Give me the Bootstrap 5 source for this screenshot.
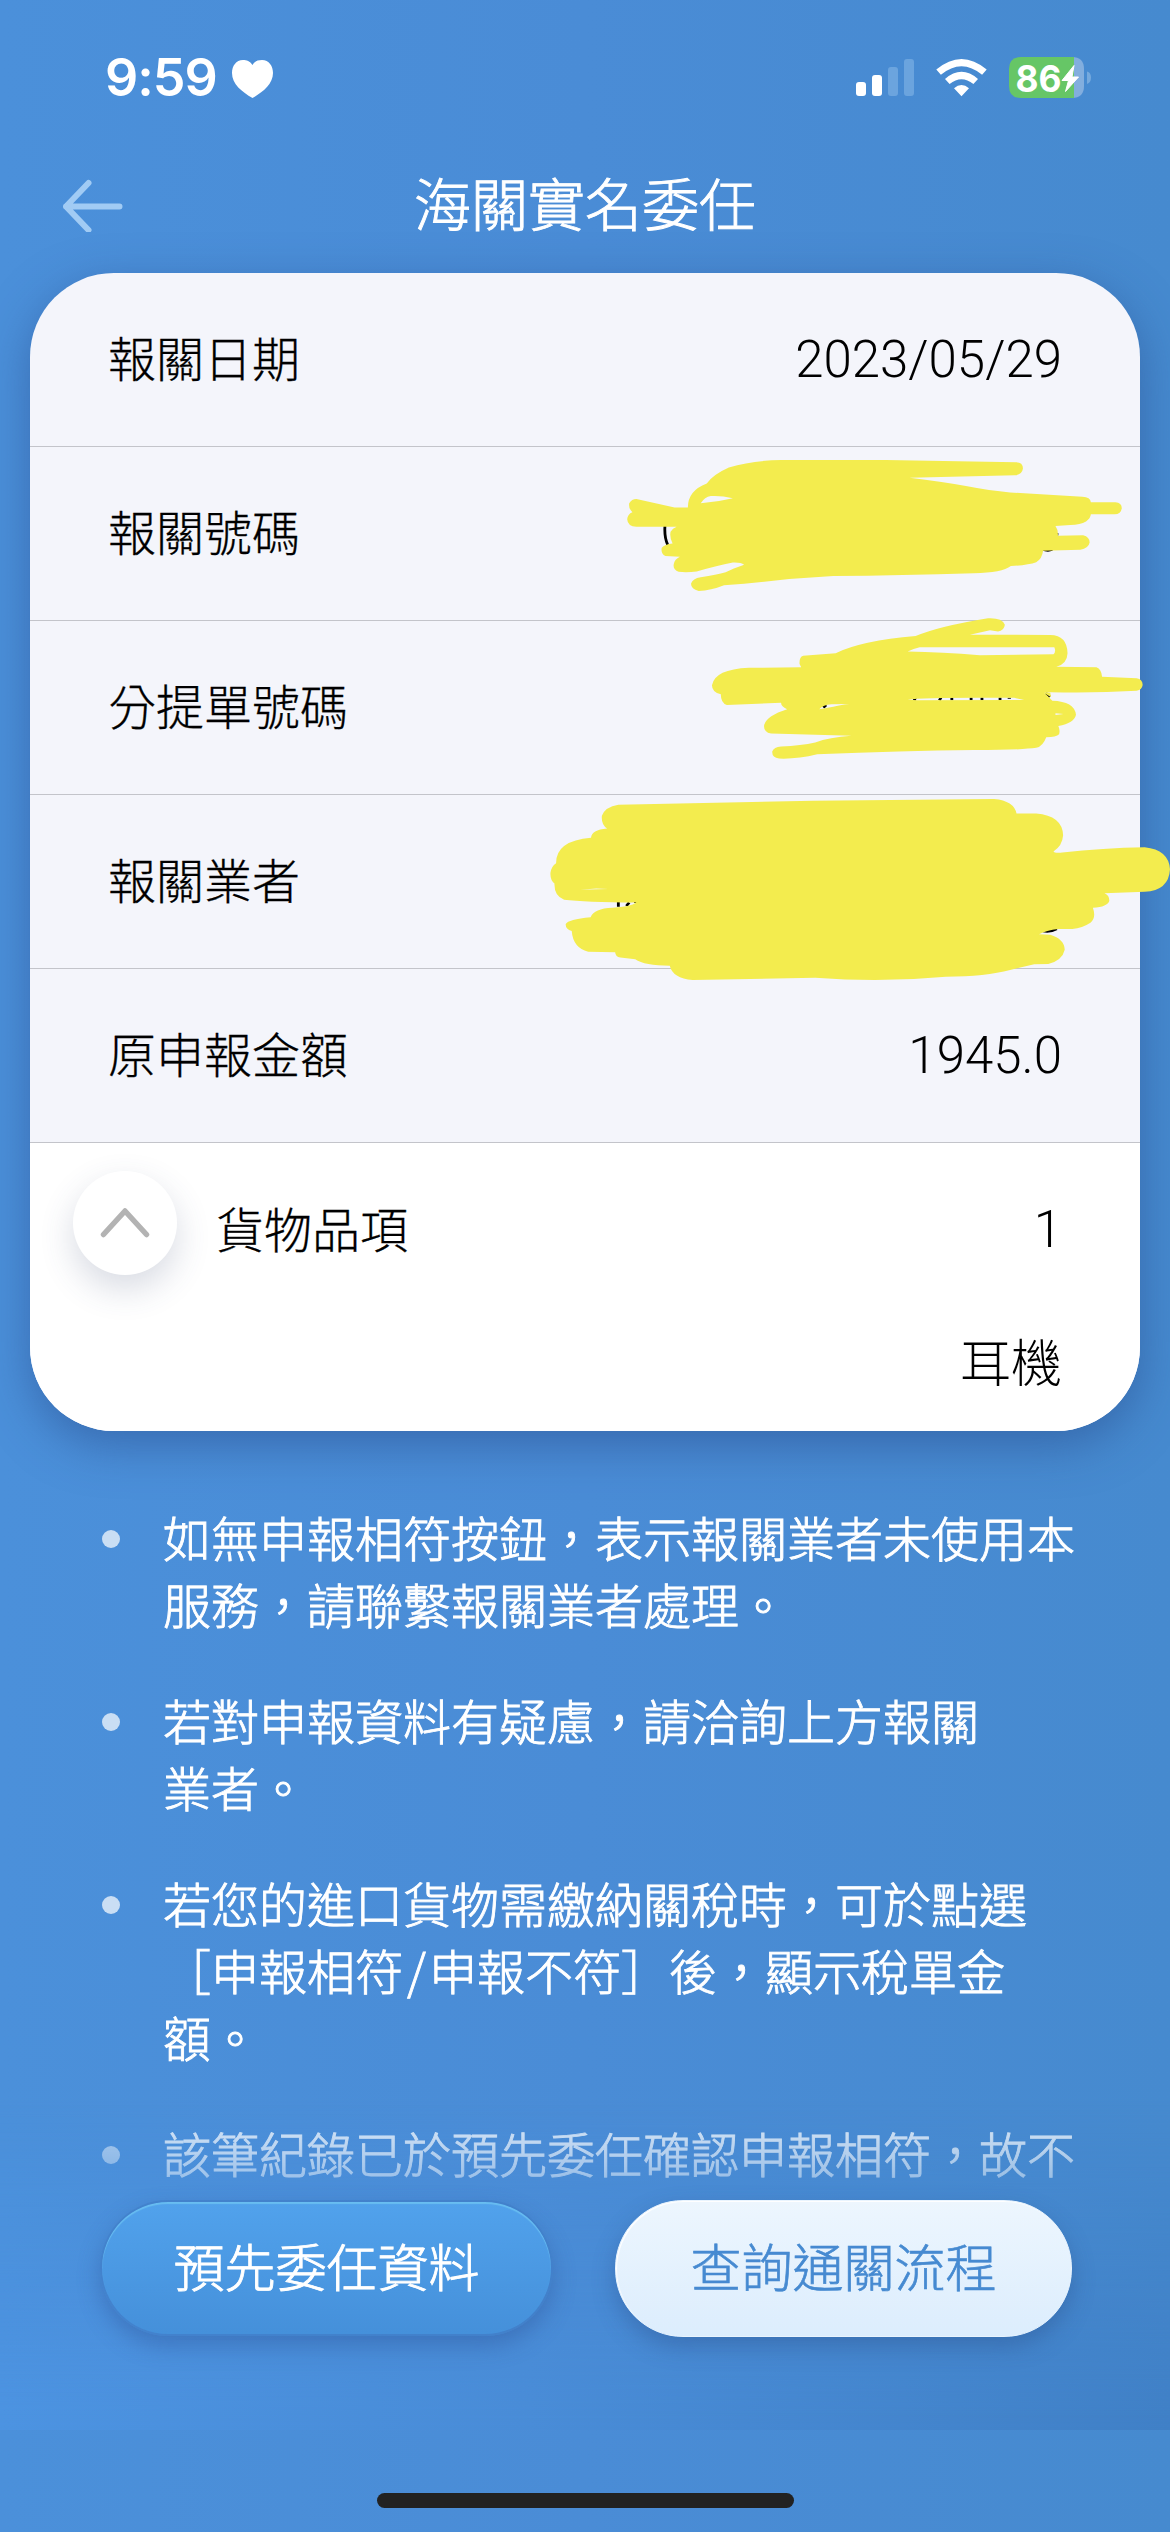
<!DOCTYPE html>
<html lang="zh-Hant">
<head>
<meta charset="utf-8">
<meta name="viewport" content="width=device-width, initial-scale=1">
<title>海關實名委任</title>
<link href="https://cdn.jsdelivr.net/npm/bootstrap@5.3.0/dist/css/bootstrap.min.css" rel="stylesheet">
<style>
html,body{height:2532px;overflow:hidden}
body{width:1170px;font-family:Roboto,"Noto Sans CJK TC",sans-serif;font-weight:300;background:linear-gradient(90deg,#4b90da,#4a8cd6 50%,#468acf)}
.statusbar{height:137px;padding:57px 78px 0 105px}
.clock{font:600 52px/41px Inter,sans-serif;letter-spacing:-1px;width:127px}
.titlebar{height:136px;padding:0 63px}
.titlebar h1{font-size:57px;font-weight:300;line-height:136px;padding-top:3px;-webkit-text-stroke:.9px}
.titlebar .side{width:60px}
.declare{margin:0 30px;height:1158px;border:0;border-radius:84px;background:#f4f5fb;box-shadow:0 14px 46px rgba(38,72,135,.5)}
.info{height:174px;padding:3px 78px 0;border-bottom:1.5px solid #c3c4ca;color:#000;font-size:48px;-webkit-text-stroke:.3px}
.info .val,.goods .val{font-size:51px;-webkit-text-stroke:0;padding-bottom:2px}
.goods{height:288px;background:#fff;border-radius:0 0 84px 84px;color:#000;font-size:48px;padding:0 78px 0 43px}
.goods .top-line{height:174px;padding-top:3px}
.goods .sub-line{height:98px;-webkit-text-stroke:.3px}
.goods .caption-text{margin-left:39px;-webkit-text-stroke:.3px}
.toggler{width:104px;height:104px;margin-top:-17px;background:#fff;border:0;border-radius:50%;box-shadow:0 14px 34px rgba(60,75,115,.2)}
.scribble{left:510px;top:157px;width:630px;height:560px;pointer-events:none}
.notes{height:770px;padding:72px 96px 0 102px;color:#fff;font-family:"Noto Sans CJK TC",sans-serif;font-size:48px;line-height:67px;-webkit-text-stroke:.9px;-webkit-mask-image:linear-gradient(#000 650px,transparent 830px);mask-image:linear-gradient(#000 650px,transparent 830px);overflow:hidden}
.notes li{margin-bottom:49px;white-space:nowrap}
.slash{margin:0 3px 0 4px}
.dot{width:18px;height:18px;margin:27px 43px 0 0;border-radius:50%;background:rgba(255,255,255,.7);flex:none}
.veil{height:330px;top:2100px;background:linear-gradient(90deg,#4c93e1,#498cd7 45%,#4080c6);-webkit-mask-image:linear-gradient(transparent,#000);mask-image:linear-gradient(transparent,#000);z-index:-1}
.actions{height:231px;margin-top:-1px;padding:0 98px 0 100px}
.pill{height:136px;border-radius:68px;font-size:51px;font-weight:300;padding:4px 0 0;-webkit-text-stroke:.9px}
.pill-a{width:453px;color:#fff;background:linear-gradient(#51a2ec,#4590da) padding-box;border:2px solid rgba(62,122,195,.6);box-shadow:inset 0 2px 1px #68bdf1,0 10px 22px rgba(42,76,145,.38)}
.pill-b{width:457px;height:137px;color:#468ad1;background:linear-gradient(#edf6fe,#dcedfd);border:1px solid #e9f4fe;box-shadow:inset 1px 1px 1px #fff,0 10px 22px rgba(42,76,135,.38)}
.pill-b{-webkit-text-stroke-width:.7px}
.home{width:417px;height:15px;border-radius:8px;background:#222;margin:62px auto 0}
</style>
<script src="https://cdn.jsdelivr.net/npm/bootstrap@5.3.0/dist/js/bootstrap.bundle.min.js"></script>
</head>
<body class="position-relative m-0">
<div class="veil position-absolute w-100"></div>
<div class="statusbar d-flex text-white">
  <div class="clock text-nowrap">9:59</div>
  <svg width="41" height="41" viewBox="0 0 41 41" fill="#fff"><path d="M20.500 8C18 4 14.500 3 11 3 4 3 0 9 0 16c0 11 10 19 20.500 25C31 35 41 27 41 16 41 9 37 3 30 3c-4 0-7 1-9.500 5Z"/></svg>
  <svg class="ms-auto" width="236" height="42" viewBox="856 57 236 42">
    <g fill="#fff"><rect x="856" y="82" width="10" height="14" rx="3"/><rect x="872" y="75" width="10" height="21" rx="3"/><g fill="#6ba4de"><rect x="888" y="67" width="10" height="29" rx="3"/><rect x="904" y="59" width="10" height="37" rx="3"/></g>
    <path d="M936.300 69.600q25.200-21.200 50.400 0l-4.600 5.100q-20.600-17-41.200 0ZM945 79q16.500-14.300 33 0l-4.600 5q-11.900-9.500-23.800 0ZM954 88.200q7.500-6.500 15 0L961.500 96.300Z"/></g>
    <path fill="#82aede" d="M1069 57h3q12 0 12 12v17q0 12-12 12h-3Z"/><path fill="#66c666" d="M1074 57v41h-53q-12 0-12-12V69q0-12 12-12Z"/><path fill="#75a9dd" d="M1087 71.500q4 1 4 6t-4 6.500Z"/>
    <text x="1015.500" y="91.500" font-family="Inter" font-weight="700" font-size="37" fill="#fff" textLength="46" lengthAdjust="spacingAndGlyphs">86</text>
    <path fill="#fff" stroke="#fff" stroke-linejoin="round" d="M1074 65.500 1062 80.500h6.500l-3 11L1078.500 77H1072Z"/>
  </svg>
</div>
<header class="titlebar d-flex align-items-center justify-content-between text-white">
  <div class="side"><svg width="60" height="54" viewBox="0 0 60 54" fill="none" stroke="#a1cbf4" stroke-width="6" stroke-linecap="round" stroke-linejoin="round" class="d-block"><path d="M56.500 28.500H3M25.500 5 3 28.500 25.500 52"/></svg></div>
  <h1 class="m-0">海關實名委任</h1>
  <div class="side"></div>
</header>
<main>
  <section class="card declare">
    <div class="info d-flex align-items-center justify-content-between"><span>報關日期</span><span class="val">2023/05/29</span></div>
    <div class="info d-flex align-items-center"><span>報關號碼</span></div>
    <div class="info d-flex align-items-center"><span>分提單號碼</span></div>
    <div class="info d-flex align-items-center"><span>報關業者</span></div>
    <div class="info d-flex align-items-center justify-content-between"><span>原申報金額</span><span class="val">1945.0</span></div>
    <div class="goods">
      <div class="top-line d-flex align-items-center">
        <button class="toggler p-0 d-flex align-items-center justify-content-center" type="button" aria-label="收合"><svg width="50" height="32" viewBox="0 0 50 32" fill="none" stroke="#b3b3b3" stroke-width="5.500" stroke-linecap="round" stroke-linejoin="round"><path d="M3.500 27.500 25 4l21.500 23.500"/></svg></button>
        <span class="caption-text">貨物品項</span><span class="val ms-auto">1</span>
      </div>
      <div class="sub-line d-flex align-items-center justify-content-end"><span class="val">耳機</span></div>
    </div>
    <svg class="scribble position-absolute" viewBox="0 0 1568 1568" preserveAspectRatio="none">
      <g fill="none" stroke="#000" stroke-width="7"><path d="M311 268q-2 33 7 54M1250 333q12 7 25 2M1286 292h4M705 777l7-7M931 757l4-8M994 757l4-8M1025 757v-8M1073 757v-8M1100 757v-8M1145 757v-8M1259 737l10 10M195 1318v17M215 1333l7-10M1252 1403q18 4 34-6"/><path stroke-width="3" d="M1164 751h8M234 1323h7"/></g>
      <g fill="#f3ec4e" fill-rule="evenodd">
      <path d="M415 150Q430 125 470 105Q530 85 600 84L860 84 1185 90Q1202 90 1202 108Q1200 125 1182 127L920 134Q1000 145 1060 157Q1120 170 1170 175L1350 187Q1370 188 1371 202L1432 202Q1448 203 1448 219Q1446 236 1430 236L1371 236Q1370 248 1359 256Q1345 265 1320 266L1283 269Q1290 280 1289 296L1352 295Q1368 300 1368 315Q1365 332 1345 335L1252 338Q1250 360 1235 370Q1215 378 1172 381Q1150 400 1080 401Q900 407 730 409L620 417Q540 428 458 435Q425 450 395 451Q375 445 376 430Q380 415 400 412Q440 405 462 398Q480 388 508 377Q500 370 480 371Q440 380 390 396Q365 400 345 397Q330 390 333 375Q335 362 348 355L312 353Q300 345 303 330Q310 320 330 318Q322 300 325 285Q330 275 340 271L240 271Q218 270 217 250Q218 235 230 230Q220 220 222 205Q228 193 240 193L335 217 368 217Q368 170 415 150ZM400 205Q410 188 425 185Q450 183 480 191Q440 202 400 205Z"/>
      <path d="M646 655Q645 635 655 632L736 625Q800 590 935 577Q990 550 1115 527Q1150 525 1157 545Q1155 562 1140 564L1120 561 1070 573 1270 574Q1312 575 1313 625Q1312 655 1285 663L1385 664Q1397 668 1399 691L1485 695Q1500 698 1500 714Q1498 728 1485 730Q1380 737 1270 734L1254 736Q1265 745 1275 758Q1330 760 1334 797Q1330 820 1290 829Q1295 840 1292 852Q1285 860 1260 860Q1252 885 1235 890Q1200 896 1080 896Q900 898 690 908Q640 922 595 920Q577 918 578 900Q582 888 600 886Q650 884 685 875Q720 860 775 856L575 850Q555 845 558 825Q565 800 615 782Q600 775 600 764L465 770Q450 765 450 740Q428 735 428 715Q435 670 520 666L650 664ZM915 620Q930 612 945 608L1280 608Q1285 620 1278 628L1095 631Q1000 621 915 620ZM695 782Q705 770 725 768L770 767Q745 770 730 775ZM915 755Q960 748 1180 750L1205 756 940 757ZM1254 736 1270 736 1272 748ZM1283 793 1303 795 1283 798Z"/>
      <path d="M167 1116Q152 1105 154 1080Q162 1055 195 1049L680 1038 1130 1033Q1180 1038 1186 1074L1235 1074Q1300 1080 1302 1135Q1300 1165 1278 1180Q1280 1185 1300 1183Q1400 1170 1505 1168Q1565 1175 1568 1230Q1565 1290 1505 1293L1405 1297Q1417 1302 1417 1318Q1413 1335 1376 1338Q1385 1365 1370 1380Q1350 1395 1325 1397L1290 1397Q1260 1400 1242 1412L1270 1413Q1305 1425 1306 1455Q1300 1485 1265 1495L1230 1496 1170 1512Q1110 1530 1010 1531Q850 1548 685 1534L380 1540Q330 1535 323 1500Q260 1500 237 1482L200 1477Q188 1475 187 1462L120 1461Q82 1450 79 1403Q63 1398 64 1383Q70 1370 126 1364Q135 1340 180 1338Q225 1335 240 1323Q110 1322 60 1315Q35 1305 36 1270Q25 1260 26 1240Q28 1222 40 1213Q40 1150 127 1142Q128 1120 167 1116ZM100 1287 170 1285 140 1284Z"/>
      </g>
    </svg>
  </section>
  <ul class="notes list-unstyled m-0">
    <li class="d-flex"><i class="dot"></i><span>如無申報相符按鈕，表示報關業者未使用本<br>服務，請聯繫報關業者處理。</span></li>
    <li class="d-flex"><i class="dot"></i><span>若對申報資料有疑慮，請洽詢上方報關<br>業者。</span></li>
    <li class="d-flex"><i class="dot"></i><span>若您的進口貨物需繳納關稅時，可於點選<br>［申報相符<span class="slash">/</span>申報不符］後，顯示稅單金<br>額。</span></li>
    <li class="d-flex"><i class="dot"></i><span>該筆紀錄已於預先委任確認申報相符，故不</span></li>
  </ul>
</main>
<div class="actions d-flex justify-content-between align-items-start">
  <button class="btn pill pill-a">預先委任資料</button>
  <button class="btn pill pill-b">查詢通關流程</button>
</div>
<div class="home"></div>
</body>
</html>
